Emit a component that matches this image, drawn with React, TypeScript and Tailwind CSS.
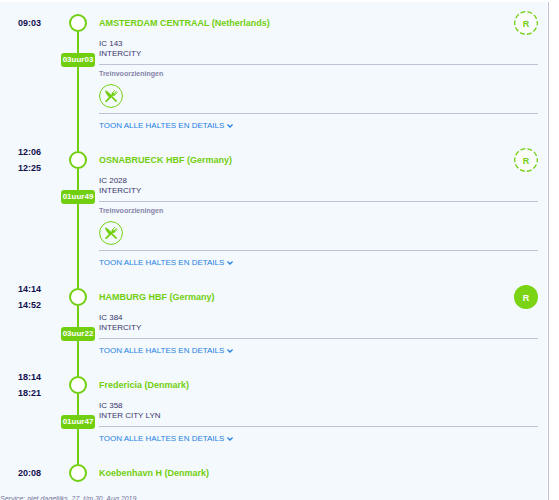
import React from "react";
import { clsx } from "clsx";

type Stop = {
  name: string;
  times: string[];
  reservation?: "optional" | "required";
  train?: string;
  type?: string;
  duration?: string;
  restaurant?: boolean;
};

const stops: Stop[] = [
  {
    name: "AMSTERDAM CENTRAAL (Netherlands)",
    times: ["09:03"],
    reservation: "optional",
    train: "IC 143",
    type: "INTERCITY",
    duration: "03uur03",
    restaurant: true,
  },
  {
    name: "OSNABRUECK HBF (Germany)",
    times: ["12:06", "12:25"],
    reservation: "optional",
    train: "IC 2028",
    type: "INTERCITY",
    duration: "01uur49",
    restaurant: true,
  },
  {
    name: "HAMBURG HBF (Germany)",
    times: ["14:14", "14:52"],
    reservation: "required",
    train: "IC 384",
    type: "INTERCITY",
    duration: "03uur22",
  },
  {
    name: "Fredericia (Denmark)",
    times: ["18:14", "18:21"],
    train: "IC 358",
    type: "INTER CITY LYN",
    duration: "01uur47",
  },
  {
    name: "Koebenhavn H (Denmark)",
    times: ["20:08"],
  },
];

function RestaurantIcon() {
  return (
    <svg viewBox="0 0 24 24" className="size-6" role="img" aria-label="Restaurant">
      <circle cx="12" cy="12" r="11.4" fill="none" stroke="#72cf10" strokeWidth="1" />
      {/* fork */}
      <g fill="none" stroke="#72cf10" strokeLinecap="round">
        <path d="M7.200 17.200 14.2 10.200" strokeWidth="1.9" />
        <path d="M13.3 9.2 15.6 6.4M15 10 17.4 7.3M15.2 11 18.2 8.6" strokeWidth="0.9" />
        <path d="M13.6 9.3c0 1.3.6 1.8 1.7 1.5" strokeWidth="1.8" />
      </g>
      {/* knife */}
      <path
        d="M6 6.2c2.4.7 5.3 3.4 7.2 5.9l4.5 4.4c.8.9-.3 2-1.2 1.2l-4.3-4.2-1.2.8C8.600 12 6.300 9.200 6 6.200Z"
        fill="#72cf10"
      />
    </svg>
  );
}

function ReservationBadge({ kind }: { kind: "optional" | "required" }) {
  const required = kind === "required";
  return (
    <span className="relative flex size-6 shrink-0 items-center justify-center">
      <svg viewBox="0 0 24 24" className="absolute inset-0" aria-hidden="true">
        {required ? (
          <circle cx="12" cy="12" r="12" fill="#7ad314" />
        ) : (
          <circle
            cx="12"
            cy="12"
            r="11.3"
            fill="#fff"
            fillOpacity="0.5"
            stroke="#72cf10"
            strokeWidth="1.3"
            strokeDasharray="4.9 2.2"
            strokeDashoffset="2.4"
          />
        )}
      </svg>
      <span
        className={clsx("relative pt-px text-[9px] leading-[10px] font-bold", required ? "text-white" : "text-[#72cf10]")}
      >
        R
      </span>
    </span>
  );
}

function StopRow({ stop }: { stop: Stop }) {
  return (
    <li className="flex">
      <div className="flex h-[18px] w-[61px] shrink-0 flex-col justify-center pl-[18px] text-[9px] leading-4 font-bold text-[#120f4f]">
        {stop.times.map((time) => (
          <time key={time}>{time}</time>
        ))}
      </div>

      {/* Rail */}
      <div className="flex w-[34px] shrink-0 flex-col items-center">
        <span className="size-[18px] shrink-0 rounded-full border-2 border-[#72cf10] bg-white" />
        {stop.duration && (
          <>
            <span className="h-[21px] w-0.5 shrink-0 bg-[#72cf10]" />
            <span className="h-[14px] w-full shrink-0 rounded-[3px] bg-[#72cf10] text-center text-[8px] leading-[14px] font-bold text-white">
              {stop.duration}
            </span>
            <span className="w-0.5 grow bg-[#72cf10]" />
          </>
        )}
      </div>

      <div className="min-w-0 grow pr-[9px] pl-1">
        <div className="flex h-[18px] items-center justify-between">
          <h2 className="text-[9px] leading-[18px] font-bold text-[#72cf10]">{stop.name}</h2>
          {stop.reservation && <ReservationBadge kind={stop.reservation} />}
        </div>

        {stop.train && (
          <>
            <div className="border-b border-[#bfc2d6] pt-[7px] pb-[5px] text-[8px] leading-[10px] text-[#38356b]">
              <p>{stop.train}</p>
              <p>{stop.type}</p>
            </div>
            {stop.restaurant && (
              <div className="border-b border-[#bfc2d6] pt-1 pb-[5px] text-[#8583a8]">
                <h3 className="mb-[5px] text-[7px] leading-[10px] font-bold">Treinvoorzieningen</h3>
                <RestaurantIcon />
              </div>
            )}
            <button
              type="button"
              className="mt-[7px] mb-5 flex cursor-pointer items-center gap-[3px] text-[8px] leading-[10px] text-[#2480e3]"
            >
              TOON ALLE HALTES EN DETAILS
              <svg viewBox="0 0 6 4" className="h-1 w-[6px]" fill="none" stroke="currentColor" strokeWidth="1.3" aria-hidden="true">
                <path d="M.4.5 3 3 5.600.5" />
              </svg>
            </button>
          </>
        )}
      </div>
    </li>
  );
}

export default function App() {
  return (
    <main className="h-screen overflow-hidden bg-white pt-0.5 pr-[10px] font-['Liberation_Sans',Arial,sans-serif]">
      <div className="h-full border-r border-[#bfc2d6] pr-px">
        <section className="h-full bg-[#f4f9fd] pt-3">
          <ol>
            {stops.map((stop) => (
              <StopRow key={stop.name} stop={stop} />
            ))}
          </ol>
          <p className="mt-3 text-[7px] leading-[10px] whitespace-nowrap text-[#77759c] italic">
            Service: niet dagelijks, 27. t/m 30. Aug 2019
          </p>
        </section>
      </div>
    </main>
  );
}
